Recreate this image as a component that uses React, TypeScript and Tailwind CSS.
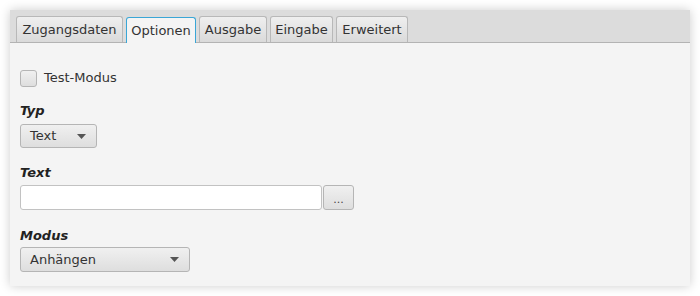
import React from "react";

const font = { fontFamily: '"DejaVu Sans", sans-serif' };

function Tab({ label, active }: { label: string; active?: boolean }) {
  return active ? (
    <div className="flex-1 h-[26px] -mb-px flex items-center justify-center rounded-t-[3px] border border-b-0 border-[#3aa6d6] bg-[#f4f4f4] text-[13px] text-[#333]">
      {label}
    </div>
  ) : (
    <div className="flex-1 h-[26px] flex items-center justify-center rounded-t-[3px] border border-b-0 border-[#b8b8b8] bg-gradient-to-b from-[#efefef] to-[#dadada] text-[13px] text-[#333]">
      {label}
    </div>
  );
}

function Caret() {
  return (
    <svg width="9" height="5" viewBox="0 0 9 5">
      <path d="M0 0 L9 0 L4.5 5 Z" fill="#555" />
    </svg>
  );
}

function Label({ children }: { children: React.ReactNode }) {
  return <div className="text-[13px] font-bold italic text-[#222] leading-[16px]">{children}</div>;
}

export default function App() {
  return (
    <div className="w-[700px] h-[296px] bg-white p-[10px]" style={font}>
      <div className="h-[276px] bg-[#f4f4f4] shadow-[0_0_10px_rgba(0,0,0,0.2)]">
        <div className="h-[33px] bg-[#dcdcdc] border-b border-[#b3b3b3] flex items-end gap-[3px] pl-[6px]">
          <div className="w-[107px] flex"><Tab label="Zugangsdaten" /></div>
          <div className="w-[70px] flex"><Tab label="Optionen" active /></div>
          <div className="w-[68px] flex"><Tab label="Ausgabe" /></div>
          <div className="w-[63px] flex"><Tab label="Eingabe" /></div>
          <div className="w-[72px] flex"><Tab label="Erweitert" /></div>
        </div>
        <div className="pl-[10px] pt-[26px]">
          <div className="flex items-center gap-[7px] h-[18px]">
            <div className="w-[17px] h-[17px] rounded-[3px] border border-[#b5b5b5] bg-gradient-to-b from-[#f0f0f0] to-[#dedede]" />
            <span className="text-[13px] text-[#333]">Test-Modus</span>
          </div>
          <div className="mt-[16px]">
            <Label>Typ</Label>
          </div>
          <div className="mt-[5px] w-[77px] h-[24px] rounded-[3px] border border-[#b5b5b5] bg-gradient-to-b from-[#f0f0f0] to-[#dedede] flex items-center justify-between pl-[9px] pr-[10px] text-[13px] text-[#333]">
            <span>Text</span>
            <Caret />
          </div>
          <div className="mt-[17px]">
            <Label>Text</Label>
          </div>
          <div className="mt-[4px] flex gap-px">
            <div className="w-[302px] h-[25px] rounded-[3px] border border-[#c2c2c2] bg-white" />
            <div className="w-[31px] h-[25px] rounded-[3px] border border-[#b5b5b5] bg-gradient-to-b from-[#f0f0f0] to-[#dedede] flex items-center justify-center text-[11px] text-[#444] pt-[5px]">
              ...
            </div>
          </div>
          <div className="mt-[18px]">
            <Label>Modus</Label>
          </div>
          <div className="mt-[3px] w-[170px] h-[25px] rounded-[3px] border border-[#b5b5b5] bg-gradient-to-b from-[#f0f0f0] to-[#dedede] flex items-center justify-between pl-[9px] pr-[10px] text-[13px] text-[#333]">
            <span>Anhängen</span>
            <Caret />
          </div>
        </div>
      </div>
    </div>
  );
}
